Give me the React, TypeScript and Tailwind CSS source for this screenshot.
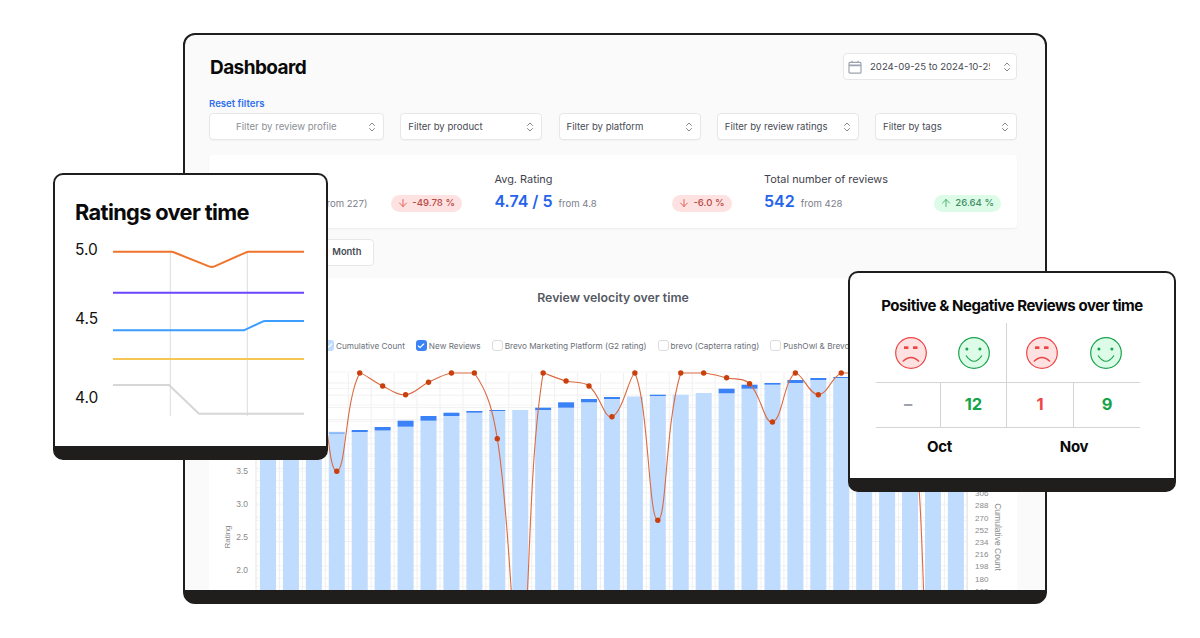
import React from "react";
import { ArrowDown, ArrowUp, ChevronsUpDown, Check } from "lucide-react";

const X0 = 268;
const DX = 22.93;
const cx = (n: number) => X0 + n * DX;

const tops: [number, number][] = [
  [432, 432], [432, 432], [432, 432], [431.5, 432.5], [429, 431], [426, 429.5], [419.7, 425.7], [415, 419.7],
  [411.7, 415], [410, 411.7], [409, 410], [409, 409], [406.7, 409], [401.3, 406.7], [398, 401.3], [396, 398],
  [395, 395.5], [393.7, 395], [393, 393.7], [392, 392], [387.7, 392.3], [383.7, 387.7], [382, 383.7], [379, 382],
  [377, 379], [376, 377], [375, 375], [374, 374], [373, 373], [372, 372], [372, 372],
];

const pts: [number, number][] = [
  [0, 372], [1, 372], [2, 372], [3, 470.3], [4, 372], [5, 385], [6, 393.7], [7, 381.3], [8, 372], [9, 372],
  [10, 437.7], [11, 660], [12, 372], [13, 380], [14, 385], [15, 415.7], [16, 372], [17, 519.3], [18, 372], [19, 372],
  [20, 376.7], [21, 382.7], [22, 421], [23, 372], [24, 393.7], [25, 372], [26, 372], [27, 385], [28, 390], [29, 760], [30, 900],
];

function linePath() {
  const p = pts.map(([n, y]) => [cx(n), y]);
  const t = 0.4;
  const cps = p.map((b, i) => {
    const a = p[Math.max(0, i - 1)];
    const c = p[Math.min(p.length - 1, i + 1)];
    const d01 = Math.hypot(b[0] - a[0], b[1] - a[1]);
    const d12 = Math.hypot(c[0] - b[0], c[1] - b[1]);
    const sum = d01 + d12 || 1;
    const fa = (t * d01) / sum;
    const fb = (t * d12) / sum;
    return {
      px: b[0] - fa * (c[0] - a[0]),
      py: Math.max(372, b[1] - fa * (c[1] - a[1])),
      nx: b[0] + fb * (c[0] - a[0]),
      ny: Math.max(372, b[1] + fb * (c[1] - a[1])),
    };
  });
  let d = `M${p[0][0]} ${p[0][1]}`;
  for (let i = 0; i < p.length - 1; i++) {
    d += ` C${cps[i].nx} ${cps[i].ny} ${cps[i + 1].px} ${cps[i + 1].py} ${p[i + 1][0]} ${p[i + 1][1]}`;
  }
  return d;
}

function Select({ w, label, muted, indent }: { w: string; label: string; muted?: boolean; indent?: boolean }) {
  return (
    <div className={`${w} h-[27px] flex items-center justify-between bg-white border border-[#e7e7e9] rounded-[4px] shadow-[0_1px_1px_rgba(0,0,0,0.03)] pr-[5px] ${indent ? "pl-[26px]" : "pl-[7px]"}`}>
      <span className={`pt-[1px] text-[9.6px] ${muted ? "text-[#8b8f98]" : "text-[#474b55]"}`}>{label}</span>
      <ChevronsUpDown size={12} strokeWidth={1.5} className="text-[#5c606a]" />
    </div>
  );
}

function Badge({ tone, value }: { tone: "red" | "green"; value: string }) {
  const red = tone === "red";
  return (
    <span className={`mt-[4px] h-[17px] pl-[6px] pr-[7px] rounded-full flex items-center gap-[3px] text-[9.6px] font-medium ${red ? "bg-[#fee2e2] text-[#b84a44]" : "bg-[#dcfce7] text-[#3f8f63]"}`}>
      {red ? <ArrowDown size={12} strokeWidth={1.8} className="text-[#e0544c]" /> : <ArrowUp size={12} strokeWidth={1.8} className="text-[#3fa868]" />}
      {value}
    </span>
  );
}

function Stat({ label, value, from, badge, tone }: { label: string; value: string; from: string; badge: string; tone: "red" | "green" }) {
  return (
    <div className="flex flex-col">
      <span className="text-[10.9px] leading-[14px] text-[#3f434d]">{label}</span>
      <div className="flex items-center justify-between mt-[3px]">
        <div className="flex items-baseline gap-[6px]">
          <span className="text-[16px] leading-[24px] font-semibold text-[#2563eb] whitespace-nowrap">{value}</span>
          <span className="text-[9.6px] text-[#7c808a]">{from}</span>
        </div>
        <Badge tone={tone} value={badge} />
      </div>
    </div>
  );
}

function Legend({ label, checked, light }: { label: string; checked?: boolean; light?: boolean }) {
  return (
    <div className="flex items-center gap-[2px] shrink-0">
      <span className={`w-[11px] h-[11px] rounded-[3px] flex items-center justify-center ${checked ? (light ? "bg-[#bfdbfe]" : "bg-[#3b82f6]") : "bg-white border border-[#dcdcdf]"}`}>
        {checked && <Check size={8} strokeWidth={3.5} className="text-white" />}
      </span>
      <span className="text-[8.2px] text-[#6b6f78] whitespace-nowrap">{label}</span>
    </div>
  );
}

function Chart() {
  const hLines: number[] = [];
  for (let y = 382; y < 600; y += 12.2) hLines.push(y);
  const hLines2: number[] = [];
  for (let y = 371; y < 600; y += 16.5) hLines2.push(y);
  const rightTicks: [string, number][] = [["306", 491.8], ["288", 504], ["270", 516.5], ["252", 528.5], ["234", 540.8], ["216", 553], ["198", 565.3], ["180", 577.6], ["162", 589.9]];
  const leftTicks: [string, number][] = [["3.5", 470], ["3.0", 503], ["2.5", 536], ["2.0", 569]];
  return (
    <svg viewBox="209 362 808 228" className="w-[808px] h-[228px] block">
      {hLines.map((y) => <line key={y} x1={256} x2={967} y1={y} y2={y} stroke="#f1f1f1" strokeWidth={1} />)}
      {hLines2.map((y) => <line key={y} x1={256} x2={967} y1={y} y2={y} stroke="#f5f5f5" strokeWidth={1} />)}
      {tops.map((_, n) => <line key={n} x1={cx(n) + DX / 2} x2={cx(n) + DX / 2} y1={372} y2={590} stroke="#f0f0f0" strokeWidth={1} />)}
      <line x1={256} x2={256} y1={372} y2={590} stroke="#e5e5e5" />
      <line x1={967} x2={967} y1={372} y2={590} stroke="#e2e2e2" />
      {tops.map(([dark, light], n) => (
        <g key={n}>
          <rect x={cx(n) - 8} y={light} width={16} height={590 - light} fill="#bfdbfe" />
          {light - dark >= 1 && <rect x={cx(n) - 8} y={dark} width={16} height={light - dark} fill="#3b82f6" />}
        </g>
      ))}
      <path d={linePath()} fill="none" stroke="#dc6a40" strokeWidth={1.1} />
      {pts.map(([n, y]) => y < 590 && <circle key={n} cx={cx(n)} cy={y} r={2.7} fill="#c9400e" />)}
      {leftTicks.map(([t, y]) => (
        <text key={t} x={248} y={y + 3} textAnchor="end" fontSize={8.5} fill="#8a8a8a" fontFamily="Liberation Sans, sans-serif">{t}</text>
      ))}
      {rightTicks.map(([t, y]) => (
        <text key={t} x={975} y={y + 3} fontSize={8} fill="#8a8a8a" fontFamily="Liberation Sans, sans-serif">{t}</text>
      ))}
      <text transform="translate(230 536) rotate(-90)" textAnchor="middle" fontSize={8} fill="#8a8a8a" fontFamily="Liberation Sans, sans-serif">Rating</text>
      <text transform="translate(995 536) rotate(90)" textAnchor="middle" fontSize={8.5} fill="#8a8a8a" fontFamily="Liberation Sans, sans-serif">Cumulative Count</text>
    </svg>
  );
}

function RatingsChart() {
  return (
    <svg viewBox="75 235 232 185" className="w-[232px] h-[185px] block">
      <line x1={170.3} x2={170.3} y1={252} y2={416} stroke="#dcdcdc" />
      <line x1={247.3} x2={247.3} y1={252} y2={416} stroke="#dcdcdc" />
      <path d="M113 251.7H171.5Q173 251.7 175 252.8L209 266.4Q211.7 267.4 214.5 266.4L245 252.8Q247 251.7 249 251.7H304" fill="none" stroke="#f0732b" strokeWidth={2} />
      <line x1={113} x2={304} y1={292.7} y2={292.7} stroke="#6b46fe" strokeWidth={2} />
      <path d="M113 330.3H244L262 321.8Q263.5 321 265.5 321H304" fill="none" stroke="#3b9dff" strokeWidth={2} />
      <line x1={113} x2={304} y1={359} y2={359} stroke="#f6c654" strokeWidth={2} />
      <path d="M113 385H169L199 413.7H304" fill="none" stroke="#d6d6d6" strokeWidth={2} />
      {[["5.0", 249.7], ["4.5", 318.7], ["4.0", 397.7]].map(([t, y]) => (
        <text key={t as string} x={75} y={(y as number) + 5.5} fontSize={15.5} fill="#111111" fontFamily="Inter, sans-serif">{t}</text>
      ))}
    </svg>
  );
}

function Face({ happy }: { happy?: boolean }) {
  const stroke = happy ? "#16a34a" : "#ef4444";
  return (
    <svg viewBox="0 0 32 32" className="w-[32px] h-[32px] block">
      <circle cx={16} cy={16} r={15.3} fill={happy ? "#dcfce7" : "#fee2e2"} stroke={stroke} strokeWidth={1.2} />
      {happy ? (
        <>
          <circle cx={8.9} cy={12} r={1.5} fill={stroke} />
          <circle cx={21.9} cy={12} r={1.5} fill={stroke} />
          <path d="M8 18.5Q16 30 24 18.5" fill="none" stroke={stroke} strokeWidth={1.2} />
        </>
      ) : (
        <>
          <rect x={9} y={9.3} width={4.4} height={2.7} fill={stroke} />
          <rect x={18} y={9.3} width={4.5} height={2.7} fill={stroke} />
          <path d="M7.8 24.5Q16 16.5 24 24.5" fill="none" stroke={stroke} strokeWidth={1.2} />
        </>
      )}
    </svg>
  );
}

export default function App() {
  const floating = "absolute bg-white border-2 border-b-[14px] border-[#1f1e1c] rounded-[10px] font-['Inter',sans-serif]";
  const cell = "flex items-center justify-center border-y border-[#d4d4d4] pb-[2px] text-[16.5px] font-bold";
  return (
    <div className="relative w-[1200px] h-[638px] overflow-hidden bg-white font-['Inter',sans-serif]">
      {/* Main window */}
      <div className="absolute left-[183px] top-[33px] w-[864px] h-[571px] bg-[#fafafa] border-2 border-b-[14px] border-[#1f1e1c] rounded-[12px] overflow-hidden flex flex-col pl-[24px] pr-[28px]">
        <div className="flex items-center justify-between h-[27px] mt-[18px] shrink-0">
          <h1 className="pt-[3px] text-[19px] font-bold tracking-[-0.03em] text-[#0a0a0a] pl-[1px]">Dashboard</h1>
          <div className="w-[174px] h-[27px] flex items-center bg-white border border-[#e7e7e9] rounded-[4px] pl-[4px] pr-[3px]">
            <svg viewBox="0 0 14 14" className="w-[14px] h-[14px] text-[#9ca3af] shrink-0" fill="none" stroke="currentColor" strokeWidth={1.2}>
              <rect x={1} y={2.4} width={12} height={10.8} rx={1} />
              <path d="M1 5.4H13" strokeWidth={1.6} />
              <path d="M4 0.8V2.6M10 0.8V2.6" />
            </svg>
            <span className="ml-[8px] pt-[1px] w-[120px] overflow-hidden whitespace-nowrap text-[9.6px] text-[#474b55]">2024-09-25 to 2024-10-25</span>
            <ChevronsUpDown size={12} strokeWidth={1.5} className="ml-auto text-[#5c606a]" />
          </div>
        </div>
        <a className="mt-[17px] text-[9.6px] leading-[14px] font-semibold text-[#2f6fed] shrink-0">Reset filters</a>
        <div className="flex justify-between mt-[2px] shrink-0">
          <Select w="w-[175px]" label="Filter by review profile" muted indent />
          <Select w="w-[142px]" label="Filter by product" />
          <Select w="w-[142px]" label="Filter by platform" />
          <Select w="w-[142px]" label="Filter by review ratings" />
          <Select w="w-[142px]" label="Filter by tags" />
        </div>
        <div className="mt-[15px] h-[73px] shrink-0 bg-white rounded-[4px] shadow-[0_1px_2px_rgba(0,0,0,0.06)] grid grid-cols-3 gap-x-[32.5px] px-[16px] pt-[17px]">
          <Stat label="New reviews" value="114 reviews" from="(from 227)" badge="-49.78 %" tone="red" />
          <Stat label="Avg. Rating" value="4.74 / 5" from="from 4.8" badge="-6.0 %" tone="red" />
          <Stat label="Total number of reviews" value="542" from="from 428" badge="26.64 %" tone="green" />
        </div>
        <div className="mt-[11px] h-[27px] w-[165px] shrink-0 grid grid-cols-3 bg-white border border-[#e7e7e9] rounded-[4px] text-[9.4px] font-semibold text-[#474b55]">
          <span className="flex items-center justify-center">Day</span>
          <span className="flex items-center justify-center">Week</span>
          <span className="flex items-center justify-center pl-[2px]">Month</span>
        </div>
        <div className="mt-[12px] flex-1 min-h-0 bg-white rounded-t-[4px] flex flex-col overflow-hidden">
          <h2 className="mt-[12px] text-center text-[12.3px] leading-[16px] font-semibold text-[#555963]">Review velocity over time</h2>
          <div className="mt-[33px] flex items-center gap-[11px] pl-[114px] h-[14px] overflow-hidden shrink-0">
            <Legend label="Cumulative Count" checked light />
            <Legend label="New Reviews" checked />
            <Legend label="Brevo Marketing Platform (G2 rating)" />
            <Legend label="brevo (Capterra rating)" />
            <Legend label="PushOwl & Brevo (Shopify rating)" />
          </div>
          <div className="mt-[10px]">
            <Chart />
          </div>
        </div>
      </div>

      {/* Ratings over time */}
      <div className={`${floating} left-[53px] top-[173px] w-[275px] h-[287px] pl-[20px]`}>
        <h3 className="mt-[24px] text-[21.8px] leading-[26px] font-bold tracking-[-0.03em] text-[#0a0a0a]">Ratings over time</h3>
        <div className="mt-[10px]">
          <RatingsChart />
        </div>
      </div>

      {/* Positive & Negative */}
      <div className={`${floating} left-[848px] top-[271px] w-[328px] h-[221px] flex flex-col items-center`}>
        <h3 className="mt-[23px] text-[15px] leading-[20px] font-bold tracking-[-0.03em] text-[#0a0a0a] whitespace-nowrap">Positive &amp; Negative Reviews over time</h3>
        <div className="mt-[7px] w-[264px] ml-[-8px] grid grid-cols-[65px_66px_67px_66px] grid-rows-[59px_46px]">
          <div className="flex items-center justify-center pl-[4px]"><Face /></div>
          <div className="flex items-center justify-center border-r border-[#d4d4d4]"><Face happy /></div>
          <div className="flex items-center justify-center pl-[2px]"><Face /></div>
          <div className="flex items-center justify-center pr-[2px]"><Face happy /></div>
          <div className={`${cell} border-r text-[#9ca3af]`}>–</div>
          <div className={`${cell} border-r text-[#16a34a]`}>12</div>
          <div className={`${cell} border-r text-[#ef4444]`}>1</div>
          <div className={`${cell} text-[#16a34a]`}>9</div>
        </div>
        <div className="w-[264px] ml-[-8px] grid grid-cols-2 mt-[9px] text-[15px] leading-[20px] font-bold tracking-[-0.02em] text-[#0a0a0a] text-center">
          <span className="pr-[5px]">Oct</span>
          <span>Nov</span>
        </div>
      </div>
    </div>
  );
}
